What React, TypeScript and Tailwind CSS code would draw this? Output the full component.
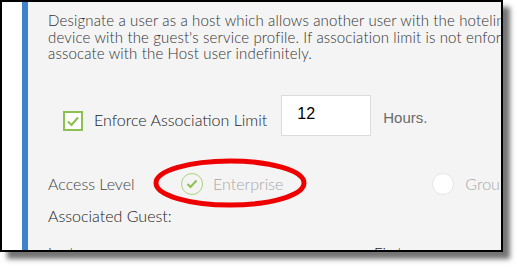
import React from "react";

export default function App() {
  return (
    <div className="relative w-[517px] h-[267px] bg-white overflow-hidden" style={{ fontFamily: "Lato, 'Noto Sans', sans-serif" }}>
      <div className="relative w-[503px] h-[252px] border-2 border-black flex shadow-[7px_7px_5px_rgba(0,0,0,0.55)] bg-white">
        <div className="w-[20px] bg-white" />
        <div className="w-[6px] bg-[#3d84cc]" />
        <div className="flex-1 bg-[#f4f4f4] overflow-hidden pl-[20px] pt-[10px] relative">
          <div className="text-[15px] leading-[16.5px] text-[#333] whitespace-nowrap font-light tracking-[0.15px]">
            <div>Designate a user as a host which allows another user with the hoteling</div>
            <div>device with the guest's service profile. If association limit is not enforced</div>
            <div>assocate with the Host user indefinitely.</div>
          </div>

          <div className="flex items-start mt-[33px] ml-[15px] whitespace-nowrap h-[41px]">
            <div className="shrink-0 mt-[16px] w-[20px] h-[20px] border-2 border-[#8cc152] bg-white flex items-center justify-center">
              <svg width="14" height="12" viewBox="0 0 14 12">
                <path d="M2 6.5 L5.5 10 L12 2.5" fill="none" stroke="#8cc152" strokeWidth="2.2" />
              </svg>
            </div>
            <span className="shrink-0 mt-[14px] leading-[22px] ml-[11px] text-[16px] text-[#222] font-light">Enforce Association Limit</span>
            <div className="shrink-0 ml-[14px] w-[90px] h-[41px] bg-white border border-[#dcdcdc] flex items-center pl-[15px] pb-[2px] text-[16px] text-black" style={{ fontFamily: "'Liberation Sans', Arial, sans-serif" }}>
              12
            </div>
            <span className="shrink-0 mt-[13px] leading-[20px] ml-[12px] text-[15px] text-[#6a6a6a]" style={{ fontFamily: "'Liberation Sans', Arial, sans-serif" }}>Hours.</span>
          </div>

          <div className="flex items-center mt-[37px] whitespace-nowrap h-[22px]">
            <span className="shrink-0 text-[16px] text-[#444] w-[133px] font-light">Access Level</span>
            <div className="shrink-0 w-[22px] h-[22px] rounded-full border border-[#a9d377] flex items-center justify-center bg-[#f4f4f4]">
              <svg width="12" height="10" viewBox="0 0 12 10">
                <path d="M1.5 5 L4.5 8 L10.5 1.5" fill="none" stroke="#8cc152" strokeWidth="2" />
              </svg>
            </div>
            <span className="shrink-0 ml-[10px] text-[16px] text-[#a8a8a8] font-light">Enterprise</span>
            <div className="shrink-0 ml-[149px] w-[22px] h-[22px] rounded-full border border-[#e6e6e6] bg-white" />
            <span className="shrink-0 ml-[11px] text-[16px] text-[#a8a8a8] font-light">Group</span>
          </div>

          <div className="mt-[9px] text-[16px] text-[#222] font-light">Associated Guest:</div>

          <div className="flex mt-[14px] text-[15px] text-[#222] whitespace-nowrap font-light">
            <span className="shrink-0 w-[326px]">Last name:</span>
            <span className="shrink-0">First name:</span>
          </div>
        </div>
      </div>
      <svg className="absolute left-0 top-0 pointer-events-none" width="517" height="267">
        <ellipse cx="230" cy="183" rx="74" ry="22" fill="none" stroke="#ee0000" strokeWidth="5" />
      </svg>
    </div>
  );
}
